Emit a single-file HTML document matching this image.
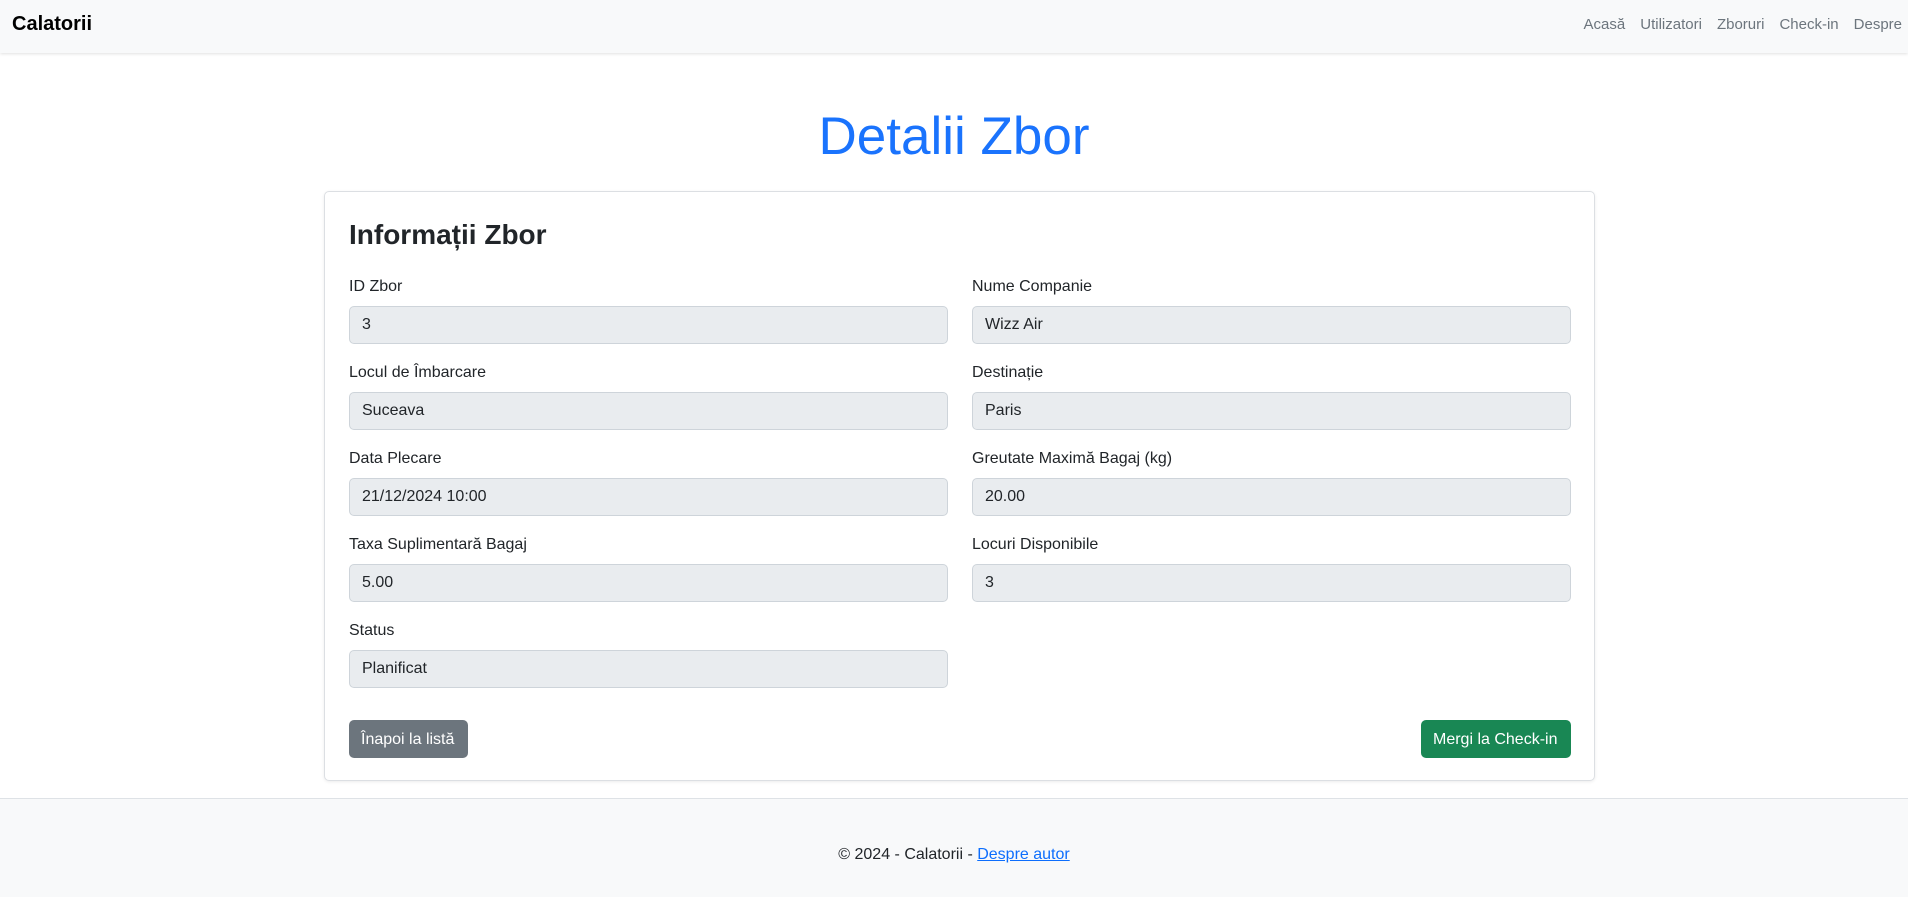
<!DOCTYPE html>
<html><head><meta charset="utf-8"><style>
*{box-sizing:border-box;margin:0;padding:0}
body{width:1908px;height:897px;font-family:"Liberation Sans",sans-serif;color:#212529;background:#fff;position:relative;overflow:hidden;font-size:16px}
.nav{position:absolute;left:0;top:0;width:1908px;height:53px;background:#f8f9fa;box-shadow:0 1px 3px rgba(0,0,0,.12)}
.brand{position:absolute;left:12px;top:13px;font-size:20px;font-weight:bold;color:#000}
.links{position:absolute;right:6px;top:16px;font-size:15px;color:#6c757d}
.links span{margin-left:15px}
h1{position:absolute;left:0;width:1908px;top:106px;text-align:center;font-weight:300;font-size:53px;color:#1a73fd}
.card{position:absolute;left:324px;top:191px;width:1271px;height:590px;border:1px solid #dcdfe3;border-radius:5px;box-shadow:0 1px 3px rgba(0,0,0,.08)}
h2{position:absolute;left:349px;top:219px;font-size:28px;font-weight:bold}
.lab{position:absolute;font-size:16px}
.inp{position:absolute;height:38px;width:599px;background:#e9ecef;border:1px solid #ced4da;border-radius:5px;padding:9px 12px;font-size:16px}
.btn{position:absolute;top:720px;height:38px;color:#fff;border-radius:5px;font-size:16px;padding:11px 12px 0;white-space:nowrap}
.foot{position:absolute;left:0;top:798px;width:1908px;height:99px;background:#f8f9fa;border-top:1px solid #dee2e6;text-align:center;padding-top:47px;font-size:16px}
.foot a{color:#0d6efd;text-decoration:underline}
</style></head><body>
<div class="nav"><div class="brand">Calatorii</div><div class="links"><span>Acasă</span><span>Utilizatori</span><span>Zboruri</span><span>Check-in</span><span>Despre</span></div></div>
<h1>Detalii Zbor</h1>
<div class="card"></div>
<h2>Informații Zbor</h2>
<div class="lab" style="left:349px;top:278px">ID Zbor</div><div class="inp" style="left:349px;top:306px">3</div>
<div class="lab" style="left:972px;top:278px">Nume Companie</div><div class="inp" style="left:972px;top:306px">Wizz Air</div>
<div class="lab" style="left:349px;top:364px">Locul de Îmbarcare</div><div class="inp" style="left:349px;top:392px">Suceava</div>
<div class="lab" style="left:972px;top:364px">Destinație</div><div class="inp" style="left:972px;top:392px">Paris</div>
<div class="lab" style="left:349px;top:450px">Data Plecare</div><div class="inp" style="left:349px;top:478px">21/12/2024 10:00</div>
<div class="lab" style="left:972px;top:450px">Greutate Maximă Bagaj (kg)</div><div class="inp" style="left:972px;top:478px">20.00</div>
<div class="lab" style="left:349px;top:536px">Taxa Suplimentară Bagaj</div><div class="inp" style="left:349px;top:564px">5.00</div>
<div class="lab" style="left:972px;top:536px">Locuri Disponibile</div><div class="inp" style="left:972px;top:564px">3</div>
<div class="lab" style="left:349px;top:622px">Status</div><div class="inp" style="left:349px;top:650px">Planificat</div>
<div class="btn" style="left:349px;width:119px;background:#6c757d">Înapoi la listă</div>
<div class="btn" style="left:1421px;width:150px;background:#198754">Mergi la Check-in</div>
<div class="foot">© 2024 - Calatorii - <a>Despre autor</a></div>
</body></html>
